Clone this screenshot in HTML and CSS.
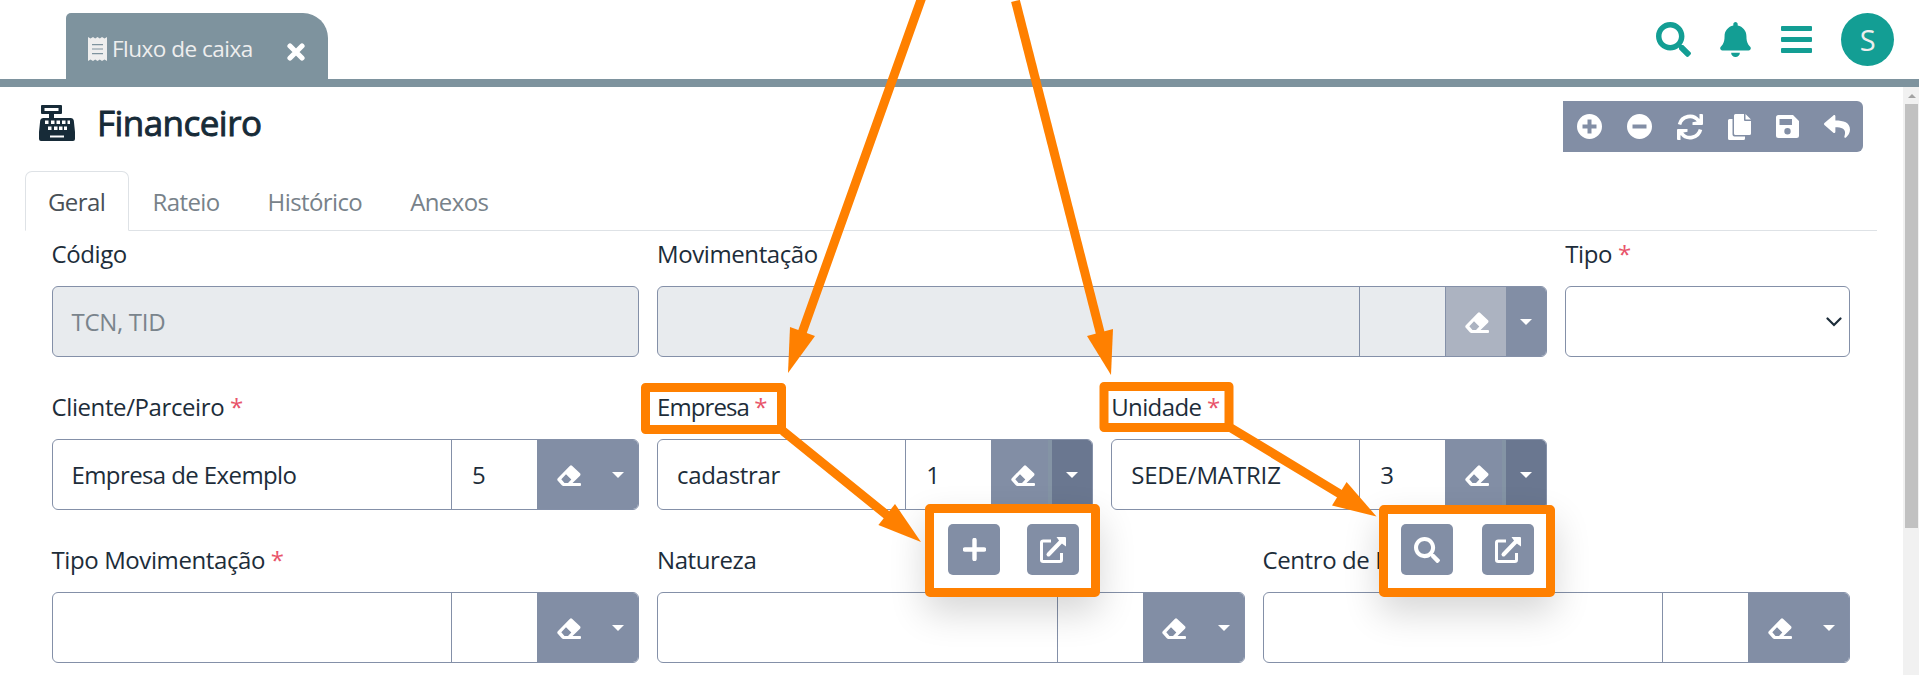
FILE: index.html
```html
<!DOCTYPE html>
<html lang="pt-BR">
<head>
<meta charset="utf-8">
<title>Financeiro</title>
<link rel="stylesheet" href="styles.css">
</head>
<body>
<svg class="defs" width="0" height="0">
  <symbol id="eraser" viewBox="0 0 24 21"><path fill-rule="evenodd" d="M13 .7Q14 -.3 15 .7L23 8.300Q24 9.500 23 10.700L15.500 18H23Q24 18 24 19V20Q24 21 23 21H6.500Q5.500 21 4.800 20.300L.8 15.800Q-.3 14.500 .8 13.200ZM9 9.200L4.300 14.300L7.500 18H11L14.300 14.500Z"/></symbol>
  <symbol id="search" viewBox="0 0 512 512"><path d="M505 442.700L405.300 343c-4.500-4.500-10.600-7-17-7H372c27.600-35.300 44-79.700 44-128C416 93.100 322.900 0 208 0S0 93.100 0 208s93.100 208 208 208c48.300 0 92.700-16.400 128-44v16.300c0 6.400 2.500 12.500 7 17l99.700 99.700c9.400 9.400 24.600 9.400 33.900 0l28.300-28.300c9.400-9.400 9.400-24.600.1-34zM208 336c-70.700 0-128-57.200-128-128 0-70.700 57.200-128 128-128 70.700 0 128 57.200 128 128 0 70.700-57.200 128-128 128z"/></symbol>
  <symbol id="external" viewBox="0 0 26 26"><path d="M11 4H3.200Q1.500 4 1.500 5.700V22.800Q1.500 24.500 3.200 24.500H19.800Q21.500 24.500 21.500 22.800V16" fill="none" stroke="currentColor" stroke-width="3"/><path d="M8.500 17.500L21 4.500" stroke="currentColor" stroke-width="4" stroke-linecap="round"/><path d="M16.500 0H25Q26 0 26 1V9.500L22.500 7L19 3.500Z"/></symbol>
</svg>

<header class="topbar">
  <div class="doc-tab">
    <svg class="receipt" viewBox="0 0 19 24"><path fill-rule="evenodd" d="M0 0L2.500 1.600L5 0L7.200 1.600L9.500 0L11.800 1.600L14 0L16.500 1.600L19 0V24L16.500 22.400L14 24L11.800 22.400L9.500 24L7.200 22.400L5 24L2.500 22.400L0 24ZM4 7V8.200H15V7ZM4 11.400V12.600H15V11.400ZM4 16V17.200H15V16Z"/></svg>
    <span class="doc-name">Fluxo de caixa</span>
    <svg class="close" viewBox="0 0 18 18"><path d="M3 3L15 15M15 3L3 15" stroke="currentColor" stroke-width="5.200" stroke-linecap="round"/></svg>
  </div>
  <div class="top-actions">
    <svg class="i-search"><use href="#search"/></svg>
    <svg class="i-bell" viewBox="0 0 448 512"><path d="M224 512c35.300 0 63.900-28.700 63.900-64H160.100c0 35.300 28.600 64 63.900 64zm215.400-149.700c-19.300-20.800-55.500-52-55.500-154.300 0-77.700-54.500-139.900-127.900-155.200V32c0-17.700-14.300-32-32-32s-32 14.300-32 32v20.800C118.600 68.100 64.100 130.300 64.100 208c0 102.300-36.200 133.500-55.500 154.300-6 6.400-8.700 14.200-8.600 21.700.1 16.400 13 32 32.100 32h383.800c19.100 0 32-15.600 32.100-32 0-7.500-2.700-15.300-8.600-21.700z"/></svg>
    <svg class="i-bars" viewBox="0 0 31 27"><rect width="31" height="5" rx="1"/><rect y="11" width="31" height="5" rx="1"/><rect y="22" width="31" height="5" rx="1"/></svg>
    <div class="avatar">S</div>
  </div>
</header>

<div class="page">
  <main class="content">
    <div class="title-row">
      <svg class="register" viewBox="0 0 36 36"><path fill-rule="evenodd" d="M3 0H22Q23 0 23 1V8Q23 9 22 9H15V13H32Q34.500 13 34.800 15.500L36 27V34Q36 36 34 36H2Q0 36 0 34V27L1.200 15.500Q1.500 13 4 13H10V9H3Q2 9 2 8V1Q2 0 3 0ZM5.500 3V6H19.500V3ZM6 15.500V19H9.500V15.500ZM12 15.500V19H15.500V15.500ZM17.500 15.500V19H21V15.500ZM23 15.500V19H26.500V15.500ZM28.500 15.500V19H31V15.500ZM9 21.500V25H12.500V21.500ZM15 21.500V25H18.500V21.500ZM20 21.500V25H23.500V21.500ZM25 21.500V25H28V21.500ZM11 30.500V32.500H25V30.500Z"/></svg>
      <h1 class="title">Financeiro</h1>
      <div class="toolbar">
        <svg class="t-plus" viewBox="0 0 25 25"><path fill-rule="evenodd" d="M12.500 0A12.500 12.500 0 1 0 12.500 25A12.500 12.500 0 1 0 12.500 0ZM10.500 5.500H14.500V10.500H19.500V14.500H14.500V19.500H10.500V14.500H5.500V10.500H10.500Z"/></svg>
        <svg class="t-minus" viewBox="0 0 25 25"><path fill-rule="evenodd" d="M12.500 0A12.500 12.500 0 1 0 12.500 25A12.500 12.500 0 1 0 12.500 0ZM5.500 10.500H19.500V14.500H5.500Z"/></svg>
        <svg class="t-sync" viewBox="0 0 26 26"><path d="M2.500 10.500A10.700 10.700 0 0 1 21.500 6.800M23.500 15.500A10.700 10.700 0 0 1 4.500 19.200" fill="none" stroke="currentColor" stroke-width="3.600"/><path d="M26 1V10Q26 11 25 11H15.500V8.200L19.500 7.600L22.500 4.500V0H25Q26 0 26 1ZM0 25V16Q0 15 1 15H10.500V17.800L6.500 18.400L3.500 21.500V26H1Q0 26 0 25Z"/></svg>
        <svg class="t-copy" viewBox="0 0 23 26"><path d="M7 0H16V6Q16 7 17 7H23V19.500Q23 21 21.500 21H7.500Q6 21 6 19.500V1.500Q6 0 7.500 0ZM17.500 0L23 5.500H17.500ZM1.500 5H4.500V20.500Q4.500 22.500 6.500 22.500H17V24.500Q17 26 15.500 26H1.500Q0 26 0 24.500V6.500Q0 5 1.500 5Z"/></svg>
        <svg class="t-save" viewBox="0 0 23 23"><path fill-rule="evenodd" d="M2.500 0H17L23 6V20.500Q23 23 20.500 23H2.500Q0 23 0 20.500V2.500Q0 0 2.500 0ZM3.500 4V10H16V4ZM11.500 13A3.200 3.200 0 1 0 11.500 19.400A3.200 3.200 0 1 0 11.500 13Z"/></svg>
        <svg class="t-back" viewBox="0 0 512 448"><path d="M8.300 157.400L184.300 5.500C199.700-7.800 224 3 224 23.700v80c160.600 1.800 288 34 288 186.300 0 61.400-39.600 122.300-83.300 154.100-13.700 9.900-33.100-2.500-28.100-18.600C446 280.500 379.100 242 224 239.700v88c0 20.700-24.300 31.500-39.700 18.200L8.300 193.800c-11.100-9.600-11.100-26.700 0-36.400z"/></svg>
      </div>
    </div>

    <nav class="tabs">
      <a class="tab tab-active">Geral</a><a class="tab">Rateio</a><a class="tab">Histórico</a><a class="tab">Anexos</a>
    </nav>

    <form class="form-grid">
      <div class="field span4"><label class="label">Código</label>
        <div class="group disabled"><div class="value muted">TCN, TID</div></div></div>
      <div class="field span6"><label class="label">Movimentação</label>
        <div class="group disabled"><div class="value"></div><div class="code"></div><div class="btn-erase faded"><svg><use href="#eraser"/></svg></div><div class="btn-caret"></div></div></div>
      <div class="field span2"><label class="label">Tipo <span class="req">*</span></label>
        <div class="group select"><svg class="chevron" viewBox="0 0 16 10"><path d="M1.500 1.500L8 8L14.500 1.500" fill="none" stroke="currentColor" stroke-width="2.200" stroke-linecap="round"/></svg></div></div>

      <div class="field span4"><label class="label">Cliente/Parceiro <span class="req">*</span></label>
        <div class="group"><div class="value">Empresa de Exemplo</div><div class="code">5</div><div class="btn-erase"><svg><use href="#eraser"/></svg></div><div class="btn-caret"></div></div></div>
      <div class="field span3"><label class="label tight">Empresa <span class="req">*</span></label>
        <div class="group"><div class="value loose">cadastrar</div><div class="code">1</div><div class="btn-erase"><svg><use href="#eraser"/></svg></div><div class="btn-caret open"></div></div>
        <div class="menu menu-empresa">
          <div class="menu-btn"><svg class="m-plus" viewBox="0 0 23 23"><path d="M11.500 2V21M2 11.500H21" stroke="currentColor" stroke-width="4.400" stroke-linecap="round"/></svg></div>
          <div class="menu-btn"><svg class="m-icon"><use href="#external"/></svg></div>
        </div></div>
      <div class="field span3"><label class="label unit">Unidade <span class="req">*</span></label>
        <div class="group"><div class="value caps">SEDE/MATRIZ</div><div class="code">3</div><div class="btn-erase"><svg><use href="#eraser"/></svg></div><div class="btn-caret open"></div></div>
        <div class="menu menu-unidade">
          <div class="menu-btn"><svg class="m-icon"><use href="#search"/></svg></div>
          <div class="menu-btn"><svg class="m-icon"><use href="#external"/></svg></div>
        </div></div>
      <div class="span2"></div>

      <div class="field span4"><label class="label">Tipo Movimentação <span class="req">*</span></label>
        <div class="group"><div class="value"></div><div class="code"></div><div class="btn-erase"><svg><use href="#eraser"/></svg></div><div class="btn-caret"></div></div></div>
      <div class="field span4"><label class="label">Natureza</label>
        <div class="group"><div class="value"></div><div class="code"></div><div class="btn-erase"><svg><use href="#eraser"/></svg></div><div class="btn-caret"></div></div></div>
      <div class="field span4"><label class="label">Centro de R</label>
        <div class="group"><div class="value"></div><div class="code"></div><div class="btn-erase"><svg><use href="#eraser"/></svg></div><div class="btn-caret"></div></div></div>
    </form>
  </main>
  <div class="scrollbar"><div class="scroll-up"></div><div class="thumb"></div></div>
</div>

<svg class="callouts" viewBox="0 0 1919 675">
  <g fill="none" stroke="#ff8000" stroke-width="9" stroke-linejoin="round">
    <rect x="645.500" y="387.500" width="136" height="42"/>
    <rect x="1104" y="386.500" width="125" height="41"/>
    <path d="M922 -3L802 333M783 431L888 516M1231 428L1340 494"/>
    <path d="M1015.500 1L1100.500 334"/>
  </g>
  <g fill="#ff8000">
    <path d="M788 373L790 327L815 336Z"/>
    <path d="M1111 375L1087 336L1113 329Z"/>
    <path d="M921 542L878.400 525L895 504Z"/>
    <path d="M1376.500 516.500L1332 505.500L1346.600 482Z"/>
  </g>
</svg>
</body>
</html>
```

FILE: styles.css
```css
* { box-sizing: border-box; }
body {
  margin: 0;
  width: 1919px;
  height: 675px;
  overflow: hidden;
  position: relative;
  background: #fff;
  color: #1d2d3a;
  font: 24px/36px "Open Sans", "Noto Sans", sans-serif;
  letter-spacing: -0.4px;
  display: flex;
  flex-direction: column;
}
svg { fill: currentColor; display: block; flex: none; }
.defs { position: absolute; }

.topbar {
  height: 87px;
  flex: none;
  border-bottom: 8px solid #7e939e;
  padding: 13px 25px 0 66px;
  display: flex;
  justify-content: space-between;
}
.doc-tab {
  width: 262px;
  height: 66px;
  background: #7e939e;
  border-radius: 5px 25px 0 0;
  color: #eee;
  padding: 0 23px 0 22px;
  display: flex;
  align-items: center;
}
.receipt { width: 19px; height: 24px; margin-top: 5px; }
.doc-name { font-size: 22.5px; margin-left: 5px; margin-top: 6px; white-space: nowrap; flex: 1; letter-spacing: -0.5px; }
.close { width: 18px; height: 18px; color: #fff; margin-top: 11px; }
.top-actions { display: flex; color: #139e94; height: 53px; align-items: center; }
.i-search { width: 35px; height: 35px; margin-right: 29px; }
.i-bell { width: 31px; height: 35px; margin-right: 30px; }
.i-bars { width: 31px; height: 27px; margin-right: 29px; }
.avatar {
  width: 53px; height: 53px; border-radius: 50%;
  background: #139e94; color: #eee;
  font-size: 29px; line-height: 54px; text-align: center;
}

.page { flex: 1; display: flex; min-height: 0; }
.content { flex: 1; min-width: 0; }
.title-row { display: flex; height: 84px; padding: 14px 40px 0 39px; align-items: flex-start; }
.register { width: 36px; height: 36px; margin-top: 4px; color: #172b38; }
.title { margin: 4px 0 0 22px; font-size: 35px; line-height: 36px; font-weight: 400; -webkit-text-stroke: .9px #172b38; letter-spacing: -0.55px; color: #172b38; flex: 1; }
.toolbar {
  width: 300px; height: 51px;
  background: #828ea5; color: #fff;
  border-radius: 0 6px 6px 0;
  display: flex; align-items: center;
  padding: 0 13px 0 14px;
  justify-content: space-between;
}
.t-plus, .t-minus { width: 25px; height: 25px; }
.t-sync { width: 26px; height: 26px; }
.t-copy { width: 23px; height: 26px; }
.t-save { width: 23px; height: 23px; }
.t-back { width: 26px; height: 23px; }

.tabs { display: flex; height: 60px; margin: 0 26px 0 25px; border-bottom: 1px solid #dee2e6; letter-spacing: -0.6px; }
.tab { padding: 13px 24.500px 0 23.500px; color: #78828a; height: 60px; }
.tab-active { width: 104px; padding: 12px 22px 0; border: 1px solid #dee2e6; border-bottom-color: #fff; border-radius: 7px 7px 0 0; color: #495057; background: #fff; }

.form-grid {
  display: grid;
  grid-template-columns: repeat(12, minmax(0, 1fr));
  column-gap: 18px;
  row-gap: 29px;
  padding: 5px 53px 0 51.500px;
}
.span2 { grid-column: span 2; }
.span3 { grid-column: span 3; }
.span4 { grid-column: span 4; }
.span6 { grid-column: span 6; }
.field { position: relative; height: 124px; }
.label { display: block; height: 50px; line-height: 36px; white-space: nowrap; }
.tight { letter-spacing: -0.9px; }
.unit { letter-spacing: -0.6px; }
.req { color: #e8546a; }
.group {
  height: 71px;
  border: 1px solid #8490a8;
  border-radius: 6px;
  display: flex;
  overflow: hidden;
  line-height: 69px;
  background: #fff;
}
.disabled { background: #e8ebee; }
.value { flex: 1; min-width: 0; padding-left: 19px; white-space: nowrap; letter-spacing: -0.6px; }
.muted, .loose { letter-spacing: -0.3px; }
.muted { color: #7a848c; }
.caps { letter-spacing: -0.15px; }
.code { width: 86px; border-left: 1px solid #8490a8; padding-left: 20px; }
.btn-erase { width: 61px; background: #828ea5; color: #fff; display: flex; align-items: center; justify-content: center; }
.btn-erase svg { width: 24px; height: 21px; margin-left: 2px; margin-top: 1px; }
.faded { background: #acb3c1; border-left: 1px solid #8490a8; }
.btn-caret { width: 40px; background: #828ea5; display: flex; align-items: center; justify-content: center; }
.btn-caret::after { content: ""; border: 6px solid transparent; border-top: 6px solid #fff; border-bottom: 0; }
.open { background: #6a7790; box-shadow: -4px 0 0 #8494a5; }
.select { justify-content: flex-end; align-items: center; padding-right: 7px; }
.chevron { width: 16px; height: 10px; }

.menu {
  position: absolute;
  z-index: 2;
  border: 9px solid #ff8000;
  border-radius: 5px;
  background: #fff;
  box-shadow: 0 16px 36px rgba(0, 0, 0, .16);
  display: flex;
  justify-content: space-between;
}
.menu-empresa { left: 268px; top: 115px; width: 175px; height: 93px; padding: 11px 12px 0 14px; }
.menu-unidade { left: 268px; top: 116px; width: 176px; height: 92px; padding: 10px 12px 0 13px; }
.menu-btn { width: 52px; height: 51px; border-radius: 5px; background: #828ea5; color: #fff; display: flex; align-items: center; justify-content: center; }
.m-plus { width: 23px; height: 23px; }
.m-icon { width: 26px; height: 26px; }

.scrollbar { width: 16px; background: #f1f1f1; padding-left: 2px; }
.scroll-up { height: 17px; display: flex; justify-content: center; align-items: center; }
.scroll-up::after { content: ""; border: 4px solid transparent; border-bottom: 4px solid #a3a3a3; border-top: 0; }
.thumb { width: 13px; height: 424px; background: #c1c1c1; }

.callouts { position: absolute; left: 0; top: 0; width: 1919px; height: 675px; z-index: 3; }
```
